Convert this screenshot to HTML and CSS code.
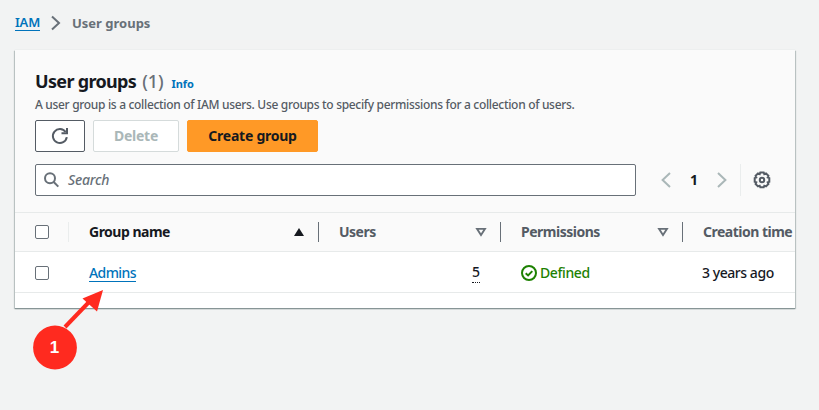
FILE: index.html
```html
<!DOCTYPE html>
<html lang="en">
<head>
<meta charset="utf-8">
<title>User groups</title>
<link rel="stylesheet" href="styles.css">
</head>
<body>
<nav class="crumbs">
  <a class="link crumb-link" href="#">IAM</a>
  <svg class="crumb-sep" width="10" height="16" viewBox="0 0 10 16"><path d="M1 1.500 8 8 1 14.500"/></svg>
  <span class="crumb-current">User groups</span>
</nav>
<main class="panel">
  <header class="head">
    <div class="title-row">
      <h1 class="title">User groups</h1><span class="count">(1)</span><a class="info" href="#">Info</a>
    </div>
    <p class="desc">A user group is a collection of IAM users. Use groups to specify permissions for a collection of users.</p>
    <div class="actions">
      <button class="btn btn-refresh" aria-label="Refresh"><svg width="18" height="18" viewBox="0 0 18 18"><path d="M15.800 10.200A7 7 0 1 1 14.600 5"/><path d="M16 1v5.200h-5.500"/></svg></button>
      <button class="btn btn-disabled">Delete</button>
      <button class="btn btn-primary">Create group</button>
    </div>
    <div class="tools">
      <div class="search">
        <svg width="16" height="16" viewBox="0 0 16 16"><circle cx="6" cy="6.300" r="5"/><path d="M9.700 10l4.600 4.600"/></svg>
        <span class="placeholder">Search</span>
      </div>
      <div class="pager">
        <svg width="10" height="16" viewBox="0 0 10 16"><path d="M9 1 1.600 8 9 15"/></svg>
        <span class="page">1</span>
        <svg width="10" height="16" viewBox="0 0 10 16"><path d="M1 1 8.400 8 1 15"/></svg>
      </div>
      <div class="settings">
        <svg width="18" height="18" viewBox="0 0 18 18"><path d="M7.300 1.500h3.400l.6 1.600 1.700-.7 2.400 2.400-.7 1.700 1.600.6v3.600l-1.600.6.7 1.700-2.400 2.400-1.700-.7-.6 1.600H7.300l-.6-1.600-1.700.7L2.600 13l.7-1.700-1.600-.6V7.100l1.600-.6-.7-1.700L5 2.400l1.700.7z"/><circle cx="9" cy="9" r="2.200"/></svg>
      </div>
    </div>
  </header>
  <div class="row row-head">
    <div class="cell cell-check"><span class="check"></span></div>
    <div class="cell cell-name sorted"><span class="th">Group name</span><svg width="12" height="10" viewBox="0 0 12 10"><path class="solid" d="M6 1 11 9H1z"/></svg></div>
    <div class="cell cell-users"><span class="th">Users</span><svg width="12" height="10" viewBox="0 0 12 10"><path d="M2 1.800h8L6 8z"/></svg></div>
    <div class="cell cell-perm"><span class="th">Permissions</span><svg width="12" height="10" viewBox="0 0 12 10"><path d="M2 1.800h8L6 8z"/></svg></div>
    <div class="cell cell-time"><span class="th">Creation time</span></div>
  </div>
  <div class="row row-body">
    <div class="cell cell-check"><span class="check"></span></div>
    <div class="cell cell-name"><a class="link admins" href="#">Admins</a></div>
    <div class="cell cell-users"><span class="num">5</span></div>
    <div class="cell cell-perm status"><svg width="16" height="16" viewBox="0 0 16 16"><circle cx="8" cy="8" r="7"/><path d="M4.700 8.200l2.400 2.200 4.200-4.300"/></svg><span>Defined</span></div>
    <div class="cell cell-time"><span class="ago">3 years ago</span></div>
  </div>
</main>
<div class="callout">
  <svg width="80" height="84" viewBox="0 0 80 84"><path class="shaft" d="M35 31 60 5"/><path class="tip" d="M73 0 52.500 8.500 67 21.500z"/><circle cx="25" cy="57.500" r="21.900"/></svg>
  <span class="callout-num">1</span>
</div>
</body>
</html>
```

FILE: styles.css
```css
* { box-sizing: border-box; }
body {
  margin: 0;
  width: 819px;
  height: 410px;
  overflow: hidden;
  background: #f2f3f3;
  color: #16191f;
  font: 500 14px/22px "Noto Sans", sans-serif;
}
svg { display: block; flex: none; fill: none; stroke: #545b64; stroke-width: 2; }
.link { color: #0073bb; text-decoration: none; border-bottom: 1px solid #0073bb; }
.crumbs { display: flex; align-items: center; height: 50px; padding: 0 0 4px 15px; font-size: 13px; font-weight: 700; line-height: 15px; }
.crumb-link { width: 25px; font-weight: 600; letter-spacing: -0.2px; }
.crumb-sep { margin: 0 11px; stroke: #687078; }
.crumb-current { color: #687078; letter-spacing: 0; }
.panel {
  width: 780px;
  height: 258px;
  margin-left: 15px;
  background: #fff;
  overflow: hidden;
  box-shadow: 0 1px 1px #879596, 1px 1px 1px #c3caca, -1px 1px 1px #c3caca, 0 0 1px #d5dbdb;
}
.head { height: 162px; padding: 19px 20px 0; background: #fafafa; }
.title-row { display: flex; align-items: baseline; height: 26px; line-height: 24px; }
.title { margin: 0; font-size: 18px; font-weight: 700; line-height: 24px; letter-spacing: -0.67px; }
.count { margin-left: 6px; font-size: 18px; color: #687078; letter-spacing: -0.1px; }
.info { margin-left: 8px; font-size: 11px; font-weight: 700; color: #0073bb; text-decoration: none; }
.desc { margin: 0; height: 25px; font-size: 12px; line-height: 20px; color: #545b64; white-space: nowrap; letter-spacing: -0.32px; }
.actions { display: flex; gap: 8px; }
.btn { display: flex; align-items: center; justify-content: center; height: 32px; padding: 0; border: 1px solid #545b64; border-radius: 2px; background: #fff; font: 700 14px/20px "Noto Sans", sans-serif; letter-spacing: -0.25px; }
.btn-refresh { width: 50px; }
.btn-disabled { width: 86px; color: #aab7b8; border-color: #d5dbdb; }
.btn-primary { width: 131px; color: #16191f; border-color: #ff9926; background: #ff9926; }
.tools { display: flex; align-items: center; height: 32px; margin-top: 12px; }
.search { display: flex; align-items: center; flex: none; gap: 8px; width: 601px; height: 32px; padding-left: 8px; border: 1px solid #687078; border-radius: 2px; background: #fff; }
.search svg { stroke: #687078; }
.placeholder { color: #687078; font-style: italic; letter-spacing: -0.2px; }
.pager { display: flex; align-items: center; justify-content: space-between; flex: none; width: 66px; margin-left: 25px; }
.pager svg { stroke: #aab7b8; }
.page { font-weight: 700; }
.settings { display: flex; align-items: center; height: 32px; margin-left: 13px; padding-left: 12px; border-left: 1px solid #eaeded; }
.row { display: flex; width: 860px; border-top: 1px solid #e7eaea; }
.row-head { height: 39px; background: #fafafa; }
.row-body { height: 42px; padding-top: 1px; border-bottom: 1px solid #e7eaea; }
.cell { display: flex; align-items: center; flex: none; }
.cell-check { width: 54px; padding-left: 20px; }
.check { width: 14px; height: 14px; border: 1px solid #687078; border-radius: 2px; background: #fff; }
.cell-name, .cell-users, .cell-perm { padding: 0 13px 0 20px; justify-content: space-between; }
.cell-name { width: 250px; }
.cell-users { width: 182px; }
.cell-perm { width: 182px; }
.cell-time { padding-left: 20px; }
.row-head .cell { height: 20px; margin-top: 9px; border-right: 1px solid #687078; }
.row-head .cell-check { border-color: #eaeded; }
.row-head .cell-time { border: 0; }
.row-head svg { stroke: #687078; stroke-width: 1.8; }
.row-head svg .solid { fill: #16191f; stroke: none; }
.th { font-weight: 700; color: #545b64; white-space: nowrap; letter-spacing: -0.5px; }
.sorted .th { color: #16191f; }
.row-body .cell-users { justify-content: flex-end; padding-right: 21px; }
.admins { padding-top: 1px; line-height: 16px; letter-spacing: -0.6px; }
.num { line-height: 20px; border-bottom: 1px dotted #16191f; }
.row-body .status { justify-content: flex-start; gap: 3px; color: #1d8102; letter-spacing: -0.4px; }
.status svg { stroke: #1d8102; }
.ago { margin-left: -1px; letter-spacing: -0.45px; }
.callout { position: absolute; left: 30px; top: 290px; width: 80px; height: 84px; }
.callout svg { stroke: none; fill: #ff2a1f; }
.callout .shaft { stroke: #ff2a1f; stroke-width: 4; }
.callout .shaft { transform: translate(0, 6px); }
.callout-num { position: absolute; left: 3px; top: 46px; width: 43px; text-align: center; color: #fff; font: 700 17px/24px "Liberation Sans", sans-serif; }
```
